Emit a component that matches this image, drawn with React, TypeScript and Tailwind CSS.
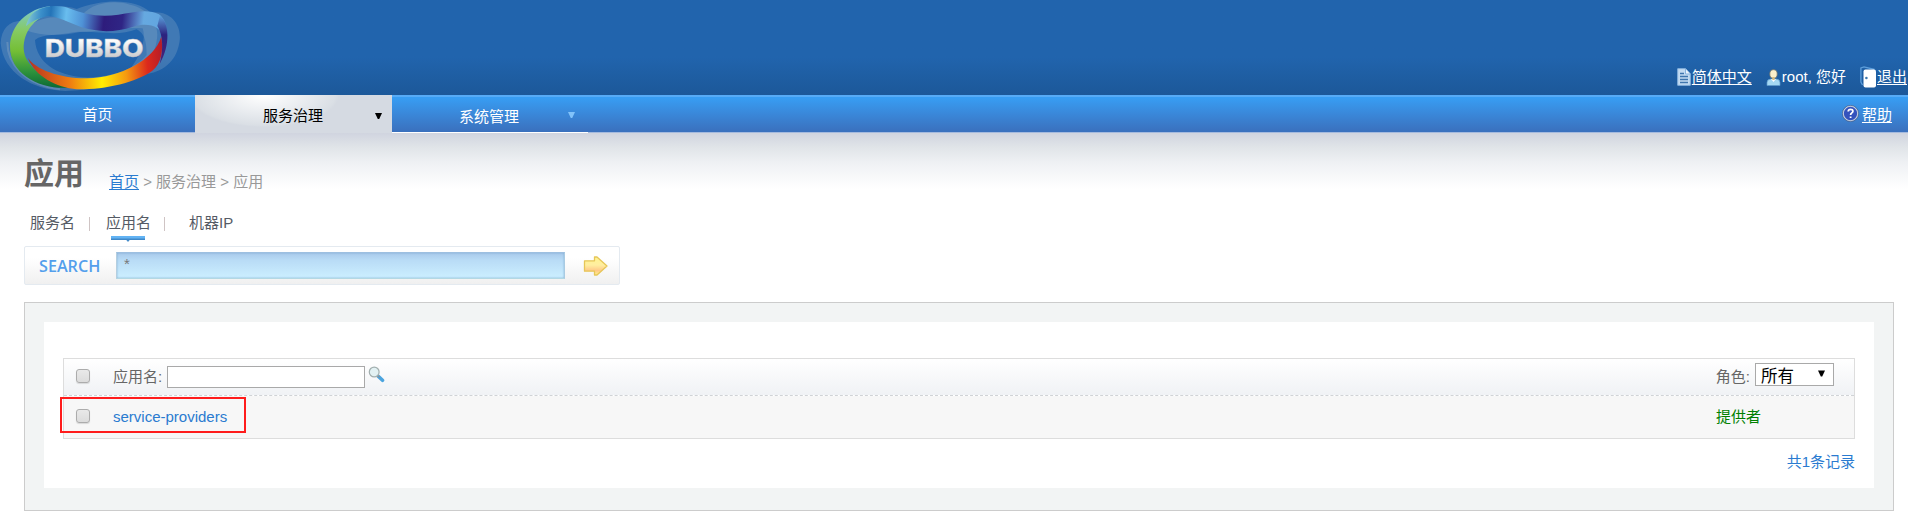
import React from 'react';

const Logo = () => (
  <svg className="block h-[95px] w-[200px] shrink-0" viewBox="0 0 600 285" aria-label="Dubbo">
    <defs>
      <linearGradient id="blue" gradientUnits="userSpaceOnUse" x1="80" y1="40" x2="500" y2="90">
        <stop offset="0" stopColor="#86cbd2" />
        <stop offset=".1" stopColor="#3b8fca" />
        <stop offset=".17" stopColor="#2474b8" />
        <stop offset=".28" stopColor="#69bdee" />
        <stop offset=".4" stopColor="#4f92d6" />
        <stop offset=".55" stopColor="#2e1c7c" />
        <stop offset=".68" stopColor="#2f2585" />
        <stop offset=".83" stopColor="#66a9e0" />
        <stop offset=".95" stopColor="#62a6e0" />
        <stop offset="1" stopColor="#3f6fb8" />
      </linearGradient>
      <linearGradient id="green" x1="0" y1="0" x2="0" y2="1">
        <stop offset="0" stopColor="#7cc9d6" />
        <stop offset=".3" stopColor="#86ca62" />
        <stop offset=".55" stopColor="#74be35" />
        <stop offset=".8" stopColor="#2f933c" />
        <stop offset="1" stopColor="#0c6a35" />
      </linearGradient>
      <linearGradient id="warm" gradientUnits="userSpaceOnUse" x1="80" y1="200" x2="490" y2="170">
        <stop offset="0" stopColor="#b33022" />
        <stop offset=".3" stopColor="#ee7a12" />
        <stop offset=".54" stopColor="#ffee00" />
        <stop offset=".72" stopColor="#f59a10" />
        <stop offset=".88" stopColor="#dc2a1c" />
        <stop offset="1" stopColor="#b31c2a" />
      </linearGradient>
      <linearGradient id="tail" x1="0" y1="0" x2="0" y2="1">
        <stop offset="0" stopColor="#5aa0dc" />
        <stop offset=".4" stopColor="#2c237f" />
        <stop offset="1" stopColor="#4b2176" />
      </linearGradient>
      <linearGradient id="word" x1="0" y1="0" x2="0" y2="1">
        <stop offset=".2" stopColor="#ffffff" />
        <stop offset="1" stopColor="#b9b9bd" />
      </linearGradient>
    </defs>
    <g fill="#a3bdd0" fillOpacity=".24">
      <path d="M2 130C4 85 28 60 70 62C120 20 180 10 230 27C310-5 410-5 452 38C510 30 545 72 539 122C532 175 500 212 440 222C350 260 270 270 195 273C95 270 10 218 2 130ZM105 120C110 190 170 225 250 232C330 235 410 205 440 165C440 115 430 100 410 88C350 112 290 90 220 97C175 108 130 100 105 120Z" fillRule="evenodd" />
      <path d="M77 90C110 45 180 48 240 55C260 15 330-5 390 14C450 28 480 72 470 122C465 172 415 206 380 220C420 175 440 120 428 85C350 80 300 95 240 96C180 110 120 108 77 90Z" />
    </g>
    <path d="M22 126C22 190 70 252 180 268" fill="none" stroke="#8ca7c5" strokeOpacity=".4" strokeWidth="6" />
    <path d="M150 19C85 25 30 75 30 140C30 220 115 268 205 263C130 240 72 195 71 145C71 95 102 55 150 42Z" fill="url(#green)" />
    <path d="M105 35C135 16 175 14 205 24C255 45 303 52 355 44C400 37 445 25 477 43C495 57 504 80 503 108L492 112C480 80 448 66 400 80C345 97 300 98 245 82C205 68 167 44 135 50C115 55 95 63 78 78C82 60 92 43 105 35Z" fill="url(#blue)" />
    <path d="M480 46C508 72 512 135 479 192C490 150 490 105 472 78Z" fill="url(#tail)" />
    <path d="M84 174C106 208 180 236 262 235C362 232 462 180 484 110C490 150 485 190 457 212C407 248 315 269 230 268C170 262 105 230 84 174Z" fill="url(#warm)" />
    <text x="134" y="172" textLength="297" lengthAdjust="spacingAndGlyphs" fontFamily="Inter, Liberation Sans, sans-serif" fontWeight="800" fontSize="75" fill="url(#word)" stroke="#b9bcc4" strokeWidth="1">DUBBO</text>
  </svg>
);

const DocIcon = () => (
  <svg className="mr-px h-[18px] w-[14px]" viewBox="0 0 14 18">
    <path d="M.7.700h8l4.600 5v11.600H.7z" fill="#c4dcf2" stroke="#88b3de" />
    <path d="M8.500 1v5h4.500" fill="#eaf4fc" stroke="#88b3de" />
    <path d="M3 5.500h4M3 8.500h8M3 11.500h8M3 14.500h8" stroke="#3f76ae" strokeWidth="1.300" />
  </svg>
);
const UserIcon = () => (
  <svg className="mr-px h-[17px] w-[15px]" viewBox="0 0 15 17">
    <path d="M1 16.500v-3q0-3.500 4-3.500h5q4 0 4 3.500v3z" fill="#a4d8f3" stroke="#5e9ccc" strokeWidth=".7" />
    <path d="M5 10l2.500 3L10 10z" fill="#fff" />
    <ellipse cx="7.500" cy="5" rx="3.700" ry="4.300" fill="#fbefcb" stroke="#77796e" strokeWidth=".8" />
    <path d="M6.300 8h2.400v3H6.300z" fill="#d8bd82" />
  </svg>
);
const DoorIcon = () => (
  <svg className="h-[22px] w-[17px]" viewBox="0 0 17 22">
    <path d="M2.500 19L.9 16V2L4 .9 14.500 3.500" fill="none" stroke="#5d9edb" strokeWidth="1.300" />
    <rect x="3.500" y="3.500" width="12.500" height="18" rx="2" fill="#fff" />
    <circle cx="6.400" cy="12" r="1.300" fill="#3e78ad" />
  </svg>
);
const HelpIcon = () => (
  <svg className="mr-[3px] h-[17px] w-[17px]" viewBox="0 0 17 17">
    <circle cx="8.500" cy="8.500" r="7.300" fill="#3553bd" stroke="#c9d3e4" strokeWidth="1.300" />
    <circle cx="8.500" cy="8.500" r="8.100" fill="none" stroke="#4b5f86" strokeWidth=".7" />
    <path d="M6.200 6.500c.2-3 4.800-2.800 4.700-.2C10.800 8 8.600 7.900 8.600 10M8.600 11.500v1.500" fill="none" stroke="#fff" strokeWidth="1.800" />
  </svg>
);
const SearchIcon = () => (
  <svg className="ml-[3px] h-[17px] w-[17px] self-start" viewBox="0 0 17 17">
    <path d="M10.500 10.500l4 3.800" stroke="#4ba4de" strokeWidth="3.600" strokeLinecap="round" />
    <path d="M9.500 9.500l2 2" stroke="#88929b" strokeWidth="1.500" />
    <circle cx="6.200" cy="6" r="4.900" fill="#e2f1f3" stroke="#a2afaf" strokeWidth="1.200" />
  </svg>
);
const ArrowIcon = () => (
  <svg className="h-[20px] w-[25px]" viewBox="0 0 25 20">
    <defs>
      <linearGradient id="gold" x1="0" y1="0" x2="0" y2="1">
        <stop offset="0" stopColor="#fff48f" />
        <stop offset=".45" stopColor="#ffeea0" />
        <stop offset=".75" stopColor="#ffc988" />
        <stop offset="1" stopColor="#fff08a" />
      </linearGradient>
    </defs>
    <path d="M1.500 4.800H11.500V1h2.500L24 10 14 19H11.500v-3.800H1.500z" fill="url(#gold)" stroke="#e6c658" strokeWidth="1.300" strokeLinejoin="round" />
  </svg>
);

const Check = () => (
  <span className="mb-[2px] ml-3 h-[14px] w-[14px] shrink-0 rounded-[3px] border border-[#acacac] bg-linear-to-b from-[#e9e9e9] to-[#dcdcdc] shadow-[0_1px_1px_rgba(0,0,0,.12)]" />
);

const Caret = ({ className }: { className: string }) => (
  <svg className={className} viewBox="0 0 7 6">
    <path d="M0 0h7L4.200 6H2.800z" fill="currentColor" />
  </svg>
);

export default function App() {
  return (
    <div className="relative h-[517px] w-[1908px] overflow-hidden bg-white font-['Liberation_Sans','Noto_Sans_CJK_SC',sans-serif] text-[15px] leading-5 text-[#666]">
      <header className="flex h-[95px] justify-between bg-linear-to-b from-[#2164ad] from-60% to-[#1c5899] text-white">
        <Logo />
        <div className="mb-[7px] flex h-[22px] items-center self-end whitespace-nowrap">
          <DocIcon />
          <a className="underline underline-offset-2">简体中文</a>
          <span className="ml-[14px] flex items-center"><UserIcon />root, 您好</span>
          <span className="ml-[14px] flex items-center"><DoorIcon /><a className="underline underline-offset-2">退出</a></span>
          <span className="w-px" />
        </div>
      </header>

      <nav className="flex h-[38px] border-t-2 border-b border-t-[#57abf6] border-b-[#a5bade] bg-linear-to-b from-[#379ef4] to-[#3a70bd] text-white">
        <a className="flex h-[35px] w-[195px] items-center justify-center pt-px">首页</a>
        <a className="-mt-[2px] flex h-[38px] w-[197px] items-center bg-[radial-gradient(ellipse_75px_32px_at_35%_0%,#ffffff,#dadfe5_95%,#d5dae2)] pt-[3px] pl-[68px] text-black">
          服务治理<Caret className="ml-[52px] h-[6px] w-[7px]" />
        </a>
        <a className="flex h-[36px] w-[196px] items-center border-b border-white pt-[4px] pl-[67px]">
          系统管理<Caret className="mb-[4px] ml-[49px] h-[6px] w-[7px] text-[#82c3fa]" />
        </a>
        <a className="mr-4 ml-auto flex h-[35px] items-center"><span className="mb-[2px]"><HelpIcon /></span><span className="underline underline-offset-2">帮助</span></a>
      </nav>

      <main className="h-[384px] bg-[linear-gradient(#d0d4df_0px,#e0e4e8_14px,#eff1f4_30px,#ffffff_56px)] pl-6">
        <div className="flex h-[70px] pt-[21px]">
          <h1 className="w-[85px] text-[30px] leading-[40px] font-bold">应用</h1>
          <div className="pt-[18px] text-[#999]"><a className="text-[#2a7bd0] underline underline-offset-2">首页</a> &gt; 服务治理 &gt; 应用</div>
        </div>

        <div className="flex h-[43px] pt-[10px] pl-[6px] text-[#555b65]">
          <a>服务名</a>
          <span className="mr-[14px] ml-[14px] mt-[4px] h-[14px] w-px bg-[#cfc4c4]" />
          <a className="ml-[2px] flex flex-col items-center">
            <span>应用名</span>
            <svg className="mt-[3px] mr-px h-[6px] w-[34px]" viewBox="0 0 34 6">
              <path d="M0 0h34v4H0z" fill="#4089c9" /><path d="M0 0h34v2.500H0z" fill="#62b3f4" /><path d="M14.500 3h5L17 6z" fill="#4089c9" />
            </svg>
          </a>
          <span className="mr-[12px] ml-[13px] mt-[4px] h-[14px] w-px bg-[#cfc4c4]" />
          <a className="ml-[12px]">机器IP</a>
        </div>

        <div className="flex h-[39px] w-[596px] items-center rounded-xs border border-[#e4eaf0] bg-linear-to-b from-white from-30% to-[#f0f0f0]">
          <div className="w-[91px] pl-[14px] font-['Open_Sans'] text-[16px] font-semibold text-[#549fec]"><span className="inline-block origin-left scale-x-[1.01]">SEARCH</span></div>
          <div className="h-[27px] w-[449px] border border-t-[#9dbfe0] border-r-[#a9cbe2] border-b-[#b3d8e3] border-l-[#b5cfe0] bg-linear-to-b from-[#a9caeb] via-[#b9dcf6] via-30% to-[#ccefff] pl-[7px] text-[15px] leading-[22px] text-[#777] shadow-[inset_0_0_2px_#7ba6cc]">*</div>
          <span className="ml-[18px]"><ArrowIcon /></span>
        </div>

        <section className="mt-[17px] h-[209px] w-[1870px] border border-[#ccc] bg-[#f2f4f4] px-[19px] pt-[19px]">
          <div className="h-[166px] w-[1830px] bg-white px-[19px] pt-[36px]">
            <div className="relative h-[81px] w-[1792px] border border-[#ddd] bg-[#f7f7f7]">
              <div className="flex h-[37px] items-center border-b border-dashed border-[#d0d3d6] bg-linear-to-b from-white to-[#f0f2f5]">
                <Check />
                <span className="ml-[23px] w-[54px] whitespace-nowrap">应用名:</span>
                <input className="h-[22px] w-[198px] border border-[#a9a9a9] bg-white px-1 outline-none" />
                <span className="flex h-[22px]"><SearchIcon /></span>
                <span className="mr-[5px] ml-auto">角色:</span>
                <div className="mr-[20px] mb-[6px] flex h-[23px] w-[79px] items-center overflow-hidden border border-[#a9a9a9] bg-white pl-[5px] text-[16.500px] leading-[21px] text-black">
                  <span className="relative top-[2px]">所有</span><Caret className="mr-[8px] mb-[2px] ml-auto h-[7px] w-[7px]" />
                </div>
              </div>
              <div className="flex h-[42px] items-center pb-px">
                <Check />
                <a className="ml-[23px] text-[#2a7bd0]">service-providers</a>
                <span className="mr-[93px] ml-auto text-[#008000]">提供者</span>
              </div>
              <div className="pointer-events-none absolute top-[38px] -left-[4px] h-[36px] w-[186px] border-2 border-[#ff1c1c]" />
            </div>
            <div className="mt-[13px] w-[1792px] text-right text-[#2a7bd0]">共1条记录</div>
          </div>
        </section>
      </main>
    </div>
  );
}
